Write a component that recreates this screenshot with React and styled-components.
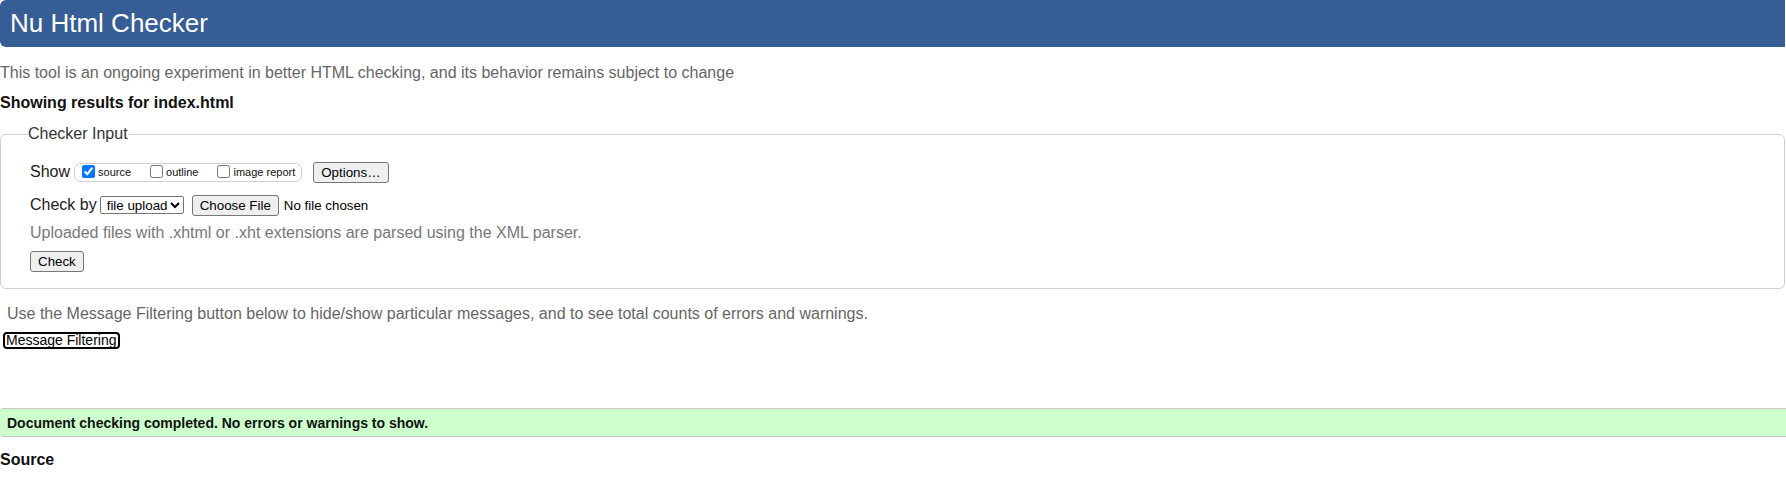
import styled, { createGlobalStyle } from "styled-components";

const GlobalStyle = createGlobalStyle`
  html, body {
    margin: 0;
    padding: 0;
    background: #fff;
  }
  body {
    font-family: "Liberation Sans", Arial, sans-serif;
    font-size: 16px;
    color: #222;
  }
`;

const Page = styled.div`
  display: flex;
  flex-direction: column;
  width: 100%;
`;

const Header = styled.h1`
  margin: 0 1px 0 0;
  height: 47px;
  padding-left: 10px;
  display: flex;
  align-items: center;
  background: #365d95;
  color: #fff;
  font-size: 26px;
  font-weight: normal;
  border-radius: 6px 0 0 6px;
`;

const Intro = styled.p`
  margin: 17px 0 0;
  line-height: 18px;
  color: #666;
`;

const Results = styled.h2`
  margin: 12px 0 0;
  font-size: 16px;
  line-height: 18px;
  font-weight: bold;
  color: #111;
`;

const Fieldset = styled.fieldset`
  margin: 13px 1px 0 0;
  padding: 17px 0 17px 29px;
  border: 1px solid #cfcfcf;
  border-radius: 6px;
  min-width: 0;
`;

const Legend = styled.legend`
  padding: 0;
  margin-left: -2px;
  line-height: 18px;
  color: #333;
`;

const Row = styled.div`
  display: flex;
  align-items: center;
  height: ${(p) => p.$h || 24}px;
  margin-top: ${(p) => p.$top || 0}px;
`;

const Label = styled.span`
  color: #222;
  margin-right: ${(p) => p.$gap || 4}px;
`;

const ShowGroup = styled.div`
  display: inline-flex;
  align-items: center;
  gap: 19px;
  height: 17px;
  padding: 0 6px 0 7px;
  border: 1px solid #cfcfcf;
  border-radius: 7px;
  margin-right: 11px;
`;

const Option = styled.label`
  display: inline-flex;
  align-items: center;
  gap: 3px;
  font-size: 11px;
  color: #111;
`;

const Box = styled.input`
  margin: 0;
  width: 13px;
  height: 13px;
  position: relative;
  top: -1px;
`;

const Button = styled.button`
  font-family: "Liberation Sans", Arial, sans-serif;
  font-size: 13.33px;
  line-height: 15px;
  padding: 2px 7px;
  color: #000;
  background: #efefef;
  border: 1px solid #767676;
  border-radius: 3px;
  margin-right: ${(p) => p.$gap || 0}px;
`;

const Select = styled.select`
  font-family: "Liberation Sans", Arial, sans-serif;
  font-size: 13.33px;
  height: 18px;
  width: 84px;
  color: #000;
  background: #fff;
  border: 1px solid #767676;
  border-radius: 2px;
  margin-right: 8px;
  padding: 0 0 0 2px;
`;

const FileName = styled.span`
  font-size: 13.33px;
  color: #000;
  margin-left: 5px;
`;

const Note = styled.p`
  margin: ${(p) => p.$top || 0}px 0 0;
  line-height: 18px;
  color: ${(p) => p.$color || "#777"};
  padding-left: ${(p) => p.$indent || 0}px;
`;

const FilterButton = styled.button`
  align-self: flex-start;
  margin: 9px 0 0 3px;
  padding: 0 1px;
  height: 17px;
  font-family: "Liberation Sans", Arial, sans-serif;
  font-size: 14px;
  line-height: 13px;
  color: #000;
  background: #fff;
  border: 2px solid #000;
  border-radius: 4px;
`;

const Success = styled.div`
  margin-top: 59px;
  height: 27px;
  display: flex;
  align-items: center;
  padding-left: 7px;
  background: #ccffcc;
  border-top: 1px solid #c8c8c8;
  border-bottom: 1px solid #c8c8c8;
  border-radius: 3px 0 0 3px;
  font-size: 14px;
  font-weight: bold;
  color: #111;
`;

const SourceTitle = styled.h2`
  margin: 14px 0 0;
  font-size: 16px;
  line-height: 18px;
  font-weight: bold;
  color: #111;
`;

export default function App() {
  return (
    <Page>
      <GlobalStyle />
      <Header>Nu Html Checker</Header>
      <Intro>
        This tool is an ongoing experiment in better HTML checking, and its behavior remains subject to change
      </Intro>
      <Results>Showing results for index.html</Results>

      <Fieldset>
        <Legend>Checker Input</Legend>
        <Row>
          <Label $gap={4}>Show</Label>
          <ShowGroup>
            <Option>
              <Box type="checkbox" defaultChecked />
              source
            </Option>
            <Option>
              <Box type="checkbox" />
              outline
            </Option>
            <Option>
              <Box type="checkbox" />
              image report
            </Option>
          </ShowGroup>
          <Button type="button">Options…</Button>
        </Row>
        <Row $top={9}>
          <Label $gap={3}>Check by</Label>
          <Select defaultValue="file">
            <option value="file">file upload</option>
            <option value="address">address</option>
            <option value="text">text input</option>
          </Select>
          <Button type="button">Choose File</Button>
          <FileName>No file chosen</FileName>
        </Row>
        <Note $top={7}>Uploaded files with .xhtml or .xht extensions are parsed using the XML parser.</Note>
        <Row $top={9} $h={20}>
          <Button type="button">Check</Button>
        </Row>
      </Fieldset>

      <Note $top={16} $color="#666" $indent={7}>
        Use the Message Filtering button below to hide/show particular messages, and to see total counts of errors and warnings.
      </Note>
      <FilterButton type="button">Message Filtering</FilterButton>

      <Success>Document checking completed. No errors or warnings to show.</Success>
      <SourceTitle>Source</SourceTitle>
    </Page>
  );
}
